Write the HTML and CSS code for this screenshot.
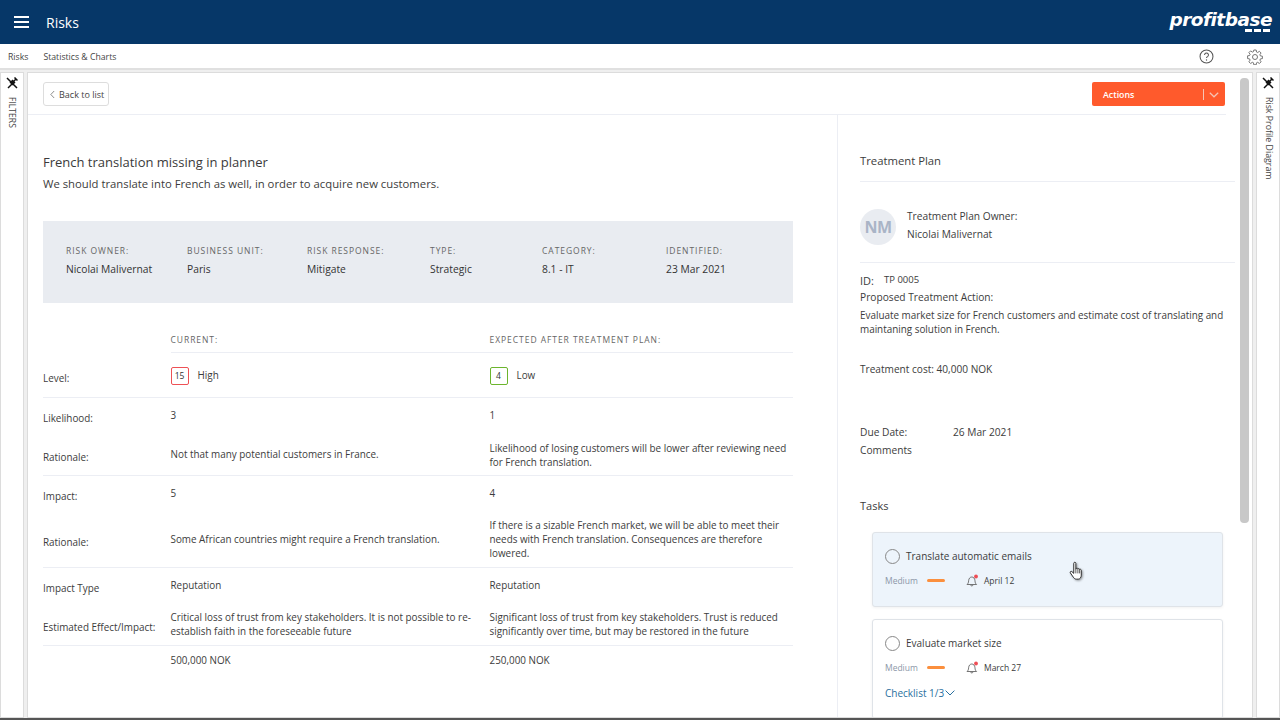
FILE: index.html
```html
<!DOCTYPE html>
<html lang="en">
<head>
<meta charset="utf-8">
<title>Risks</title>
<link rel="stylesheet" href="styles.css">
</head>
<body>
<div class="app">
  <header class="topbar">
    <button class="burger" aria-label="Menu"><span></span><span></span><span></span></button>
    <div class="app-title">Risks</div>
    <div class="logo"><span class="logo-text">profitbase</span><span class="logo-dash"><i></i><i></i><i></i></span></div>
  </header>
  <nav class="subnav">
    <a>Risks</a>
    <a>Statistics &amp; Charts</a>
    <span class="spacer"></span>
    <svg class="help" viewBox="0 0 16 16" width="15" height="15"><circle cx="8" cy="8" r="6.9" fill="none" stroke="#555" stroke-width="1.1"/><path d="M5.900 6.300a2.100 2.100 0 1 1 3.200 1.800c-.7.4-1.100.8-1.100 1.600" fill="none" stroke="#555" stroke-width="1.100"/><circle cx="8" cy="11.700" r=".7" fill="#555"/></svg>
    <svg class="gear" viewBox="0 0 16 16" width="16" height="16"><path d="M6.800 1h2.400l.3 2 1.200.5 1.700-1.200 1.700 1.700-1.200 1.700.5 1.200 2 .3v2.400l-2 .3-.5 1.200 1.200 1.700-1.700 1.700-1.700-1.200-1.200.5-.3 2H6.800l-.3-2-1.200-.5-1.700 1.200-1.700-1.700 1.200-1.700-.5-1.200-2-.3V6.800l2-.3.5-1.200-1.200-1.700 1.700-1.700 1.700 1.200 1.200-.5z" fill="none" stroke="#666" stroke-width=".9"/><circle cx="8" cy="8" r="2.500" fill="none" stroke="#666" stroke-width=".9"/></svg>
  </nav>
  <div class="workspace">
    <aside class="rail rail-left">
      <svg class="pin" viewBox="0 0 12 12" width="12" height="12"><path d="M1 1l10 10M2 11l4-4M7 5l3-3M8.500 .5l3 3" stroke="#111" stroke-width="1.500" fill="none"/><path d="M3.500 5.500l3-3 3 3-3 3z" fill="#111"/></svg>
      <span class="rail-text upper">FILTERS</span>
    </aside>
    <main class="card">
      <div class="toolbar">
        <button class="back"><svg viewBox="0 0 6 10" width="5" height="9"><path d="M5 .8L1 5l4 4.200" fill="none" stroke="#666" stroke-width=".9"/></svg>Back to list</button>
        <div class="actions"><span class="actions-label">Actions</span><span class="actions-sep"></span><svg viewBox="0 0 10 6" width="10" height="6"><path d="M.8 .8L5 4.800 9.200 .8" fill="none" stroke="#f6c5b5" stroke-width="1.200"/></svg></div>
      </div>
      <div class="content">
        <section class="left">
          <h1 class="risk-title">French translation missing in planner</h1>
          <p class="risk-desc">We should translate into French as well, in order to acquire new customers.</p>
          <div class="summary">
            <div class="sum-item s1"><div class="cap">RISK OWNER:</div><div class="val">Nicolai Malivernat</div></div>
            <div class="sum-item s2"><div class="cap">BUSINESS UNIT:</div><div class="val">Paris</div></div>
            <div class="sum-item s3"><div class="cap">RISK RESPONSE:</div><div class="val">Mitigate</div></div>
            <div class="sum-item s4"><div class="cap">TYPE:</div><div class="val">Strategic</div></div>
            <div class="sum-item s5"><div class="cap">CATEGORY:</div><div class="val">8.1 - IT</div></div>
            <div class="sum-item s6"><div class="cap">IDENTIFIED:</div><div class="val">23 Mar 2021</div></div>
          </div>
          <table class="grid">
            <tr class="r-head"><td></td><th>CURRENT:</th><th>EXPECTED AFTER TREATMENT PLAN:</th></tr>
            <tr class="r-level line"><td class="lab-level">Level:</td><td class="lvl"><span class="score red">15</span>High</td><td class="lvl"><span class="score green">4</span>Low</td></tr>
            <tr class="r-like"><td class="lab">Likelihood:</td><td class="up">3</td><td class="up">1</td></tr>
            <tr class="r-rat1 line"><td class="lab2">Rationale:</td><td class="up1">Not that many potential customers in France.</td><td>Likelihood of losing customers will be lower after reviewing need for French translation.</td></tr>
            <tr class="r-imp"><td class="lab">Impact:</td><td class="up">5</td><td class="up">4</td></tr>
            <tr class="r-rat2 line"><td class="lab2">Rationale:</td><td class="up1">Some African countries might require a French translation.</td><td class="up1">If there is a sizable French market, we will be able to meet their needs with French translation. Consequences are therefore lowered.</td></tr>
            <tr class="r-type"><td class="lab-type">Impact Type</td><td class="up-type">Reputation</td><td class="up-type">Reputation</td></tr>
            <tr class="r-eff line"><td class="lab2">Estimated Effect/Impact:</td><td>Critical loss of trust from key stakeholders. It is not possible to re-establish faith in the foreseeable future</td><td>Significant loss of trust from key stakeholders. Trust is reduced significantly over time, but may be restored in the future</td></tr>
            <tr class="r-cost"><td></td><td>500,000 NOK</td><td>250,000 NOK</td></tr>
          </table>
        </section>
        <section class="right">
          <h2 class="plan-title">Treatment Plan</h2>
          <div class="owner">
            <div class="avatar">NM</div>
            <div class="owner-text"><div>Treatment Plan Owner:</div><div>Nicolai Malivernat</div></div>
          </div>
          <div class="id-row"><span class="id-lab">ID:</span><span>TP 0005</span></div>
          <div class="prop">Proposed Treatment Action:</div>
          <p class="prop-text">Evaluate market size for French customers and estimate cost of translating and maintaning solution in French.</p>
          <div class="cost">Treatment cost: 40,000 NOK</div>
          <div class="due"><span class="due-lab">Due Date:</span><span>26 Mar 2021</span></div>
          <div class="comments">Comments</div>
          <h3 class="tasks-title">Tasks</h3>
          <div class="task hover">
            <div class="task-head"><span class="radio"></span>Translate automatic emails</div>
            <div class="task-meta"><span class="prio">Medium</span><i class="dash"></i>
              <svg class="bell" viewBox="0 0 13 13" width="13" height="13"><path d="M1 10.500c1.200-1 1.500-2 1.600-3.700C2.800 4.300 4.200 3 5.800 3s3 1.300 3.200 3.800c.1 1.700.4 2.700 1.600 3.700zM4.500 10.800c.2 1.500 2.400 1.500 2.600 0" fill="none" stroke="#666" stroke-width=".9"/><circle cx="10" cy="2.500" r="1.900" fill="#ee4d55"/></svg>
              <span class="date">April 12</span></div>
            <svg class="cursor" viewBox="0 0 18 24" width="17" height="22"><path d="M6 2.500c0-1.500 2.300-1.500 2.300 0V9l.4-.9c.8-.6 1.700-.2 1.800.5.700-.6 1.800-.3 1.900.6.800-.4 1.800 0 1.800 1v5.300c0 2-1.300 4.300-3.200 4.300H8.800c-1.500 0-2.500-1-3.300-2.200L2.300 13c-.7-1.200.7-2.300 1.700-1.400L6 13.500z" fill="#fff" stroke="#222" stroke-width="1"/><path d="M8.300 9v4.500M10.500 8.700v4.800M12.400 9.300v4.200" stroke="#222" stroke-width=".8"/></svg>
          </div>
          <div class="task">
            <div class="task-head"><span class="radio"></span>Evaluate market size</div>
            <div class="task-meta"><span class="prio">Medium</span><i class="dash"></i>
              <svg class="bell" viewBox="0 0 13 13" width="13" height="13"><path d="M1 10.500c1.200-1 1.500-2 1.600-3.700C2.800 4.300 4.200 3 5.800 3s3 1.300 3.200 3.800c.1 1.700.4 2.700 1.600 3.700zM4.500 10.800c.2 1.500 2.400 1.500 2.600 0" fill="none" stroke="#666" stroke-width=".9"/><circle cx="10" cy="2.500" r="1.900" fill="#ee4d55"/></svg>
              <span class="date">March 27</span></div>
            <div class="checklist">Checklist 1/3<svg viewBox="0 0 10 6" width="10" height="6"><path d="M.6 .6L5 5 9.400 .6" fill="none" stroke="#2a6f9e" stroke-width="1"/></svg></div>
          </div>
        </section>
      </div>
      <div class="scroll"><div class="thumb"></div></div>
    </main>
    <aside class="rail rail-right">
      <svg class="pin" viewBox="0 0 12 12" width="12" height="12"><path d="M1 1l10 10M2 11l4-4M7 5l3-3M8.500 .5l3 3" stroke="#111" stroke-width="1.500" fill="none"/><path d="M3.500 5.500l3-3 3 3-3 3z" fill="#111"/></svg>
      <span class="rail-text">Risk Profile Diagram</span>
    </aside>
  </div>
  <div class="bottom-edge"></div>
</div>
</body>
</html>
```
FILE: styles.css
```css
* { box-sizing: border-box; }
html, body { margin: 0; height: 100%; overflow: hidden; }
body { font-family: "Open Sans", "Noto Sans", sans-serif; font-size: 10.2px; color: #3c3c3c; background: #fff; }
.app { display: flex; flex-direction: column; height: 720px; width: 1280px; }
.topbar { height: 44px; flex: none; background: #063768; display: flex; align-items: center; padding-left: 14px; color: #fff; }
.burger { width: 15px; height: 12px; padding: 0; border: 0; background: none; display: flex; flex-direction: column; justify-content: space-between; margin-right: 17px; }
.burger span { display: block; height: 2px; background: #fff; }
.app-title { font-size: 14px; flex: 1; }
.logo { width: 112px; display: flex; flex-direction: column; align-items: flex-end; padding-right: 8px; margin-top: -1px; }
.logo-text { font-family: "DejaVu Sans", sans-serif; font-style: italic; font-weight: 700; font-size: 18.5px; line-height: 17px; letter-spacing: -.5px; color: #fff; }
.logo-dash { display: flex; gap: 2px; margin-top: 1px; padding-right: 2px; }
.logo-dash i { width: 7px; height: 3px; background: #fff; }
.subnav { height: 26px; flex: none; display: flex; align-items: center; padding: 1px 17px 0 8px; background: #fff; border-bottom: 2px solid #e0e0e0; font-size: 8.700px; color: #444; }
.subnav a { margin-right: 15px; }
.spacer { flex: 1; }
.help { margin-right: 33px; }
.workspace { flex: 1; display: flex; min-height: 0; padding-top: 2px; background: #efefef; gap: 3px; }
.rail { width: 24px; flex: none; background: #fff; border: 1px solid #dcdcdc; display: flex; flex-direction: column; align-items: center; padding-top: 4px; }
.rail-text { writing-mode: vertical-rl; margin-top: 8px; font-size: 8.800px; color: #444; }
.rail-right .rail-text { margin-left: 1px; }
.upper { font-size: 8.600px; }
.card { flex: 1; min-width: 0; background: #fff; border: 1px solid #dcdcdc; position: relative; display: flex; flex-direction: column; }
.toolbar { height: 42px; flex: none; display: flex; align-items: flex-start; justify-content: space-between; padding: 9px 1px 0 15px; border-bottom: 1px solid #eceef4; margin-right: 26px; }
.back { height: 24px; width: 66px; border: 1px solid #ddd; border-radius: 3px; background: #fff; font: inherit; font-size: 9px; color: #444; display: flex; align-items: center; gap: 4px; padding: 0 0 0 6px; white-space: nowrap; }
.actions { width: 133px; height: 24px; background: #ff5a2c; border-radius: 2px; color: #fff; display: flex; align-items: center; padding: 1px 6px 0 11px; font-size: 8.800px; font-weight: 600; }
.actions-label { flex: 1; }
.actions-sep { width: 1px; height: 11px; background: #f6c5b5; margin-right: 5px; }
.content { flex: 1; display: flex; min-height: 0; overflow: hidden; }
.left { width: 810px; flex: none; border-right: 1px solid #eceef4; padding: 38px 44px 0 15px; }
.risk-title { margin: 0; font-size: 13px; line-height: 18px; font-weight: 500; color: #3a3a3a; }
.risk-desc { margin: 5px 0 0; font-size: 11.300px; line-height: 15px; }
.summary { margin-top: 30px; height: 82px; background: #e9ecf1; padding: 24px 0 0 23px; display: flex; }
.sum-item { flex: none; }
.s1 { width: 121px; } .s2 { width: 120px; } .s3 { width: 123px; } .s4 { width: 112px; } .s5 { width: 124px; }
.cap { font-size: 8.500px; letter-spacing: .95px; color: #666; line-height: 12px; }
.val { font-size: 10.300px; line-height: 14px; margin-top: 5px; color: #333; }
.grid { width: 750px; margin-top: 26px; border-collapse: collapse; table-layout: fixed; font-size: 9.900px; line-height: 14px; }
.grid td, .grid th { padding: 0 4px 0 0; vertical-align: middle; text-align: left; font-weight: 400; }
.grid td:first-child { width: 127.500px; }
.grid td:nth-child(2), .grid th:nth-child(2) { width: 319px; }
.r-head { height: 23px; }
.r-head th { font-size: 8.500px; letter-spacing: .95px; color: #666; border-bottom: 1px solid #eceef4; }
.line td { border-bottom: 1px solid #eceef4; }
.grid td.lab { padding-top: 3px; }
.grid td.lab2 { padding-top: 5px; }
.grid td.lab-level { padding-top: 8px; }
.grid td.lab-type { padding-top: 5px; }
.grid td.lvl { padding-top: 2px; }
.grid td.up { padding-bottom: 3px; }
.grid td.up1 { padding-bottom: 2px; }
.grid td.up-type { padding-bottom: 1px; }
.r-level { height: 45px; } .r-like { height: 38px; } .r-rat1 { height: 40px; }
.r-imp { height: 38px; } .r-rat2 { height: 54px; } .r-type { height: 37px; } .r-eff { height: 41px; }
.r-cost { height: 30px; }
.score { display: inline-block; min-width: 18px; height: 18px; line-height: 16px; border: 1px solid; border-radius: 2px; text-align: center; margin-right: 9px; font-size: 8.500px; color: #333; vertical-align: middle; }
.red { border-color: #ee5155; } .green { border-color: #6cb52d; }
.right { flex: 1; min-width: 0; padding: 38px 17px 0 22px; }
.plan-title { margin: 0; font-size: 11.300px; line-height: 16px; font-weight: 500; padding-bottom: 12px; border-bottom: 1px solid #eceef4; }
.owner { height: 81px; display: flex; align-items: center; padding-top: 10px; border-bottom: 1px solid #eceef4; }
.avatar { width: 36px; height: 36px; border-radius: 50%; background: #e9ecf1; color: #a9b4c6; font-size: 16px; font-weight: 700; display: flex; align-items: center; justify-content: center; letter-spacing: -.5px; }
.owner-text { margin-left: 11px; line-height: 18px; margin-top: -5px; }
.id-row { margin-top: 8px; display: flex; align-items: flex-start; line-height: 16px; font-size: 9.500px; }
.id-row span:last-child { padding-top: 1px; }
.id-lab { font-size: 11px; width: 24px; padding-top: 2px; }
.prop { line-height: 14px; font-size: 10.200px; margin-top: 1px; }
.prop-text { margin: 4px 0 0; line-height: 14px; font-size: 9.900px; }
.cost { margin-top: 26px; font-size: 10.100px; line-height: 14px; }
.due { margin-top: 49px; display: flex; line-height: 14px; }
.due-lab { width: 93px; }
.comments { line-height: 14px; margin-top: 4px; }
.tasks-title { margin: 41px 0 0; font-size: 11px; line-height: 16px; font-weight: 400; }
.task { width: 351px; margin: 18px 0 0 12px; height: 100px; background: #fff; border: 1px solid #dfe3e8; border-radius: 3px; padding: 15px 12px 0; position: relative; box-shadow: 0 1px 3px rgba(0,0,0,.06); }
.task.hover { height: 75px; background: #edf4fb; margin-top: 18px; }
.task.hover + .task { margin-top: 12px; }
.task-head { display: flex; align-items: center; font-size: 10px; line-height: 16px; }
.radio { width: 15px; height: 15px; border: 1px solid #888; border-radius: 50%; margin-right: 6px; flex: none; }
.task-meta { display: flex; align-items: center; margin-top: 10px; font-size: 8.500px; line-height: 12px; }
.prio { color: #8c97a8; width: 42px; }
.dash { width: 18px; height: 3px; border-radius: 2px; background: #fb8f3d; margin-right: 21px; }
.bell { margin-right: 5px; flex: none; }
.checklist { margin-top: 12px; color: #2a6f9e; font-size: 10px; line-height: 14px; display: flex; align-items: center; gap: 1px; }
.cursor { position: absolute; left: 195px; top: 28px; filter: drop-shadow(1px 1px 1px rgba(0,0,0,.4)); }
.scroll { position: absolute; right: 0; top: 0; bottom: 0; width: 15px; padding: 5px 3px 0 3px; }
.thumb { width: 9px; height: 445px; background: #c8c8c8; border-radius: 4px; }
.bottom-edge { height: 2px; background: #555; flex: none; }
```
